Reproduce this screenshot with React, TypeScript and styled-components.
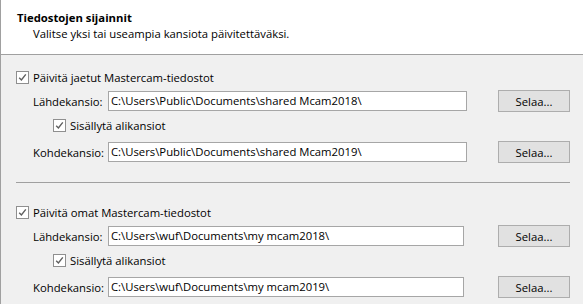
import React from "react";
import styled, { createGlobalStyle } from "styled-components";

const Global = createGlobalStyle`
  html, body {
    margin: 0;
    padding: 0;
    background: #f0f0f0;
  }
  body {
    font-family: "Segoe UI", "Open Sans", "Noto Sans", sans-serif;
    font-size: 11.3px;
    color: #000;
  }
`;

const Window = styled.div`
  width: 583px;
  height: 304px;
  box-sizing: border-box;
  border-left: 1px solid #a0a0a0;
  background: #f0f0f0;
  overflow: hidden;
`;

const Header = styled.header`
  height: 55px;
  box-sizing: border-box;
  padding: 10px 0 0 16px;
  background: #fff;
  border-bottom: 1px solid #a0a0a0;
`;

const Title = styled.div`
  font-weight: 700;
  line-height: 16px;
`;

const Subtitle = styled.div`
  line-height: 16px;
  padding-left: 16px;
`;

const Body = styled.main`
  display: flex;
  flex-direction: column;
  padding: 14px 13px 0 15px;
`;

const Group = styled.section`
  display: flex;
  flex-direction: column;
`;

const CheckRow = styled.label<{ $indent?: number; $top?: number }>`
  display: flex;
  align-items: center;
  gap: 4px;
  height: 16px;
  padding-left: ${(p) => p.$indent ?? 0}px;
  margin-top: ${(p) => p.$top ?? 0}px;
`;

const Box = styled.span`
  width: 11px;
  height: 11px;
  border: 1px solid #8f8f8f;
  background: #fff;
  display: flex;
  align-items: center;
  justify-content: center;
`;

const FieldRow = styled.div<{ $top: number }>`
  display: flex;
  align-items: center;
  height: 22px;
  margin-top: ${(p) => p.$top}px;
  padding-left: 17px;
`;

const FieldLabel = styled.span`
  width: 75px;
  flex-shrink: 0;
`;

const Input = styled.div<{ $width: number }>`
  width: ${(p) => p.$width}px;
  height: 20px;
  box-sizing: border-box;
  border: 1px solid #a6a6a6;
  background: #fff;
  padding-left: 2px;
  line-height: 18px;
  white-space: nowrap;
`;

const Button = styled.button`
  margin-left: auto;
  width: 72px;
  height: 22px;
  box-sizing: border-box;
  border: 1px solid #adadad;
  background: #e1e1e1;
  font: inherit;
  color: #000;
  padding: 0;
`;

const Separator = styled.hr`
  margin: 19px 0 0;
  border: 0;
  border-top: 1px solid #a0a0a0;
  height: 0;
`;

const Check = () => (
  <Box>
    <svg width="9" height="9" viewBox="0 0 9 9">
      <path d="M1.2 4.8 L3.4 7 L7.8 1.4" fill="none" stroke="#5f5f5f" strokeWidth="1.4" />
    </svg>
  </Box>
);

type Props = {
  title: string;
  src: string;
  dst: string;
  width: number;
  top: number;
};

const FolderGroup = ({ title, src, dst, width, top }: Props) => (
  <Group>
    <CheckRow $top={top}>
      <Check />
      {title}
    </CheckRow>
    <FieldRow $top={5}>
      <FieldLabel>Lähdekansio:</FieldLabel>
      <Input $width={width}>{src}</Input>
      <Button>Selaa...</Button>
    </FieldRow>
    <CheckRow $indent={37} $top={5}>
      <Check />
      Sisällytä alikansiot
    </CheckRow>
    <FieldRow $top={8}>
      <FieldLabel>Kohdekansio:</FieldLabel>
      <Input $width={width}>{dst}</Input>
      <Button>Selaa...</Button>
    </FieldRow>
  </Group>
);

export default function App() {
  return (
    <Window>
      <Global />
      <Header>
        <Title>Tiedostojen sijainnit</Title>
        <Subtitle>Valitse yksi tai useampia kansiota päivitettäväksi.</Subtitle>
      </Header>
      <Body>
        <FolderGroup
          top={0}
          title="Päivitä jaetut Mastercam-tiedostot"
          src="C:\Users\Public\Documents\shared Mcam2018\"
          dst="C:\Users\Public\Documents\shared Mcam2019\"
          width={359}
        />
        <Separator />
        <FolderGroup
          top={21}
          title="Päivitä omat Mastercam-tiedostot"
          src="C:\Users\wuf\Documents\my mcam2018\"
          dst="C:\Users\wuf\Documents\my mcam2019\"
          width={356}
        />
      </Body>
    </Window>
  );
}
